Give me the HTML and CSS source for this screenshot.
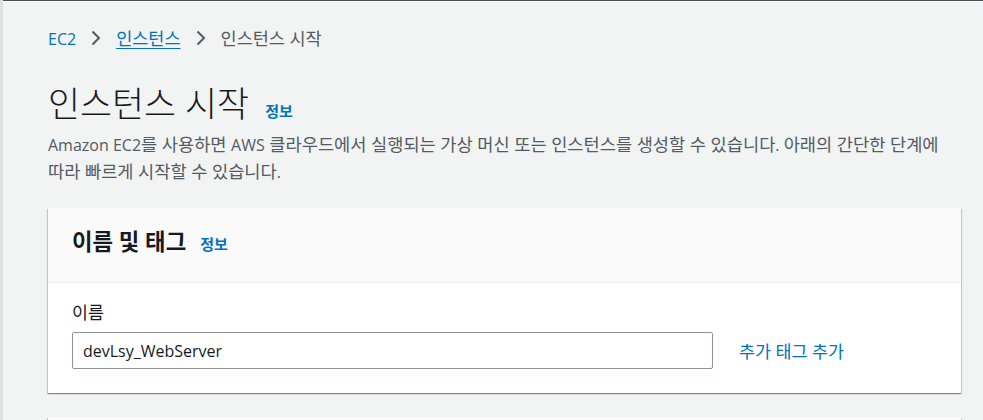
FILE: index.html
```html
<!DOCTYPE html>
<html lang="ko">
<head>
<meta charset="utf-8">
<title>인스턴스 시작</title>
<link rel="stylesheet" href="styles.css">
</head>
<body>
<div class="topbar"></div>
<main class="main">
  <nav class="breadcrumb">
    <a class="crumb-link plain" href="#"><span class="latin">EC2</span></a>
    <svg class="chev" width="12" height="16" viewBox="0 0 12 16"><path d="M2.5 1.5 L9 8 L2.5 14.5" fill="none" stroke="#545b64" stroke-width="2"/></svg>
    <a class="crumb-link" href="#">인스턴스</a>
    <svg class="chev" width="12" height="16" viewBox="0 0 12 16"><path d="M2.5 1.5 L9 8 L2.5 14.5" fill="none" stroke="#545b64" stroke-width="2"/></svg>
    <span class="crumb-current">인스턴스 시작</span>
  </nav>
  <header class="page-head">
    <h1 class="page-title">인스턴스 시작</h1>
    <a class="info" href="#">정보</a>
  </header>
  <p class="desc"><span class="latin">Amazon EC2</span><span>를 사용하면 </span><span class="latin">AWS</span><span> 클라우드에서 실행되는 가상 머신 또는 인스턴스를 생성할 수 있습니다</span><span class="latin">. </span><span>아래의 간단한 단계에 </span><span>따라 빠르게 시작할 수 있습니다</span><span class="latin">.</span></p>

  <section class="card">
    <div class="card-head">
      <h2 class="card-title">이름 및 태그</h2>
      <a class="info" href="#">정보</a>
    </div>
    <div class="card-body">
      <label class="field-label" for="name">이름</label>
      <div class="field-row">
        <input id="name" class="text-input" type="text" value="devLsy_WebServer">
        <a class="add-link" href="#">추가 태그 추가</a>
      </div>
    </div>
  </section>

  <section class="card next-card">
    <div class="card-head empty"></div>
  </section>
</main>
</body>
</html>
```

FILE: styles.css
```css
html, body {
  margin: 0;
  padding: 0;
  background: #f2f3f3;
  overflow: hidden;
}
body {
  border-left: 3px solid #dde1e1;
  font-family: "Open Sans", "Noto Sans CJK KR", sans-serif;
  color: #16191f;
  height: 420px;
  box-sizing: border-box;
}
.latin {
  font-size: 16px;
}
.topbar {
  height: 1px;
  background: #4a5059;
  border-bottom: 1px solid #ffffff;
}
.main {
  padding: 0 22px 0 45px;
}
.breadcrumb {
  display: flex;
  align-items: center;
  gap: 14px;
  padding-top: 25px;
  height: 22px;
  font-size: 17.5px;
  line-height: 22px;
}
.crumb-link {
  color: #0073bb;
  text-decoration: underline;
  text-decoration-thickness: 1px;
  text-underline-offset: 3px;
}
.crumb-link.plain {
  text-decoration: none;
}
.crumb-current {
  color: #545b64;
}
.chev {
  display: block;
}
.page-head {
  display: flex;
  align-items: baseline;
  gap: 16px;
  margin-top: 35px;
}
.page-title {
  margin: 0;
  font-size: 34.8px;
  line-height: 40px;
  font-weight: 300;
  color: #16191f;
}
.info {
  color: #0073bb;
  font-size: 15px;
  font-weight: 700;
  text-decoration: none;
}
.desc {
  margin: 7px 0 0;
  font-size: 17.6px;
  line-height: 26px;
  color: #545b64;
  word-break: keep-all;
}
.card {
  margin-top: 23px;
  background: #ffffff;
  box-shadow: 0 1px 1px 0 rgba(0, 28, 36, 0.3), 1px 1px 1px 0 rgba(0, 28, 36, 0.15), -1px 1px 1px 0 rgba(0, 28, 36, 0.15);
}
.card-head {
  display: flex;
  align-items: baseline;
  gap: 14px;
  padding: 20px 24px 26px;
  background: #fafafa;
  border-bottom: 1px solid #eaeded;
}
.card-title {
  margin: 0;
  font-size: 22.3px;
  line-height: 28px;
  font-weight: 700;
}
.card-body {
  padding: 19px 24px 24px;
}
.field-label {
  display: block;
  font-size: 17.3px;
  line-height: 22px;
  color: #16191f;
}
.field-row {
  display: flex;
  align-items: center;
  gap: 26px;
  margin-top: 8px;
}
.text-input {
  width: 641px;
  height: 37px;
  box-sizing: border-box;
  border: 1px solid #8d9596;
  border-radius: 2px;
  padding: 0 10px;
  font-family: "Open Sans", "Noto Sans CJK KR", sans-serif;
  font-size: 16px;
  color: #16191f;
  background: #ffffff;
}
.add-link {
  color: #0073bb;
  font-size: 17.4px;
  text-decoration: none;
}
.next-card {
  margin-top: 24px;
}
.card-head.empty {
  height: 28px;
}
```
